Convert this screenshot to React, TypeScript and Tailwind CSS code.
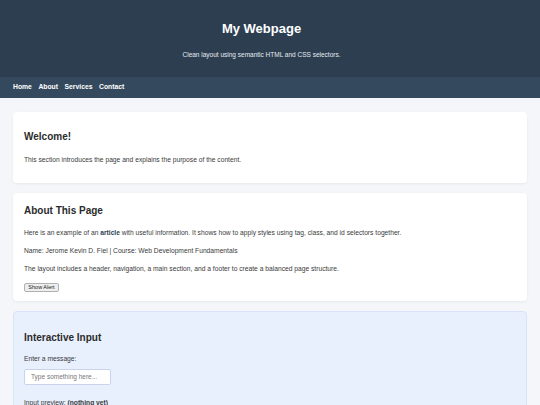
import React from "react";

export default function App() {
  return (
    <div
      className="h-[405px] bg-[#f4f6f9] text-[#3a3a3a] overflow-hidden"
      style={{ fontFamily: '"Liberation Sans", Arial, sans-serif' }}
    >
      <header className="bg-[#2c3e50] h-[77px] flex flex-col items-center text-white pr-[17px]">
        <h1 className="mt-[21px] text-[13px] leading-[16px] font-bold">My Webpage</h1>
        <p className="mt-[14px] text-[6.5px] leading-[8px] text-[#e6ebf0]">
          Clean layout using semantic HTML and CSS selectors.
        </p>
      </header>
      <nav className="bg-[#34495e] h-[21px] flex items-center px-[13px] gap-[6.5px] text-white text-[6.8px] font-bold">
        <span>Home</span>
        <span>About</span>
        <span>Services</span>
        <span>Contact</span>
      </nav>
      <main className="px-[13px] pt-[14px] flex flex-col gap-[10px]">
        <section className="bg-white rounded-[4px] shadow-[0_1px_3px_rgba(0,0,0,0.06)] h-[71px] px-[11px] pt-[19px]">
          <h2 className="text-[10px] leading-[12px] font-bold text-[#2b2b2b]">Welcome!</h2>
          <p className="mt-[13px] text-[6.7px] leading-[8px]">
            This section introduces the page and explains the purpose of the content.
          </p>
        </section>
        <article className="bg-white rounded-[4px] shadow-[0_1px_3px_rgba(0,0,0,0.06)] h-[108px] px-[11px] pt-[12px]">
          <h2 className="text-[10px] leading-[12px] font-bold text-[#2b2b2b]">About This Page</h2>
          <p className="mt-[11.5px] text-[6.7px] leading-[8px]">
            Here is an example of an <strong className="text-[#2c3e50]">article</strong> with useful
            information. It shows how to apply styles using tag, class, and id selectors together.
          </p>
          <p className="mt-[10px] text-[6.7px] leading-[8px]">
            Name: Jerome Kevin D. Fiel | Course: Web Development Fundamentals
          </p>
          <p className="mt-[10px] text-[6.7px] leading-[8px]">
            The layout includes a header, navigation, a main section, and a footer to create a
            balanced page structure.
          </p>
          <button className="mt-[10px] block w-[35px] h-[9px] text-[5.5px] leading-[7px] bg-[#efefef] border border-[#b0b0b0] rounded-[2px] text-[#222]">
            Show Alert
          </button>
        </article>
        <section className="bg-[#e8effd] border border-[#d9e3f9] rounded-[4px] h-[120px] px-[10px] pt-[20px]">
          <h2 className="text-[10px] leading-[12px] font-bold text-[#2b2b2b]">Interactive Input</h2>
          <p className="mt-[11px] text-[6.7px] leading-[8px]">Enter a message:</p>
          <div className="mt-[6px] w-[87px] h-[16px] bg-white border border-[#c9d4ea] rounded-[2px] flex items-center px-[6px] text-[6.5px] text-[#777]">
            Type something here...
          </div>
          <p className="mt-[14px] text-[6.7px] leading-[8px]">
            Input preview: <strong>(nothing yet)</strong>
          </p>
        </section>
      </main>
    </div>
  );
}
